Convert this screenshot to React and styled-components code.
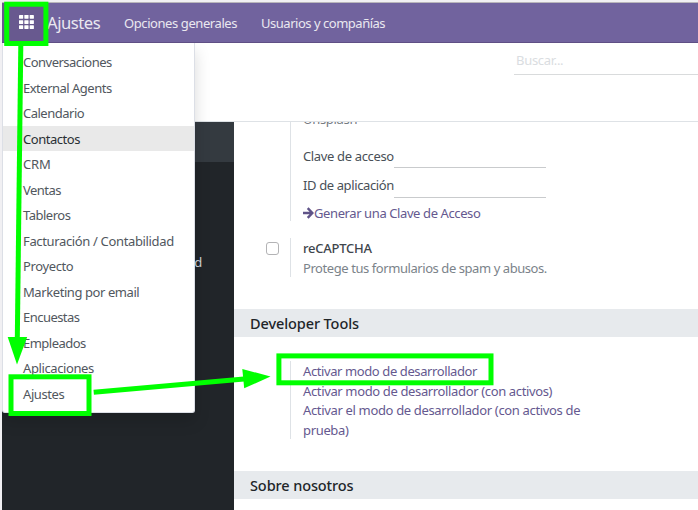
import React from 'react';
import styled, { createGlobalStyle } from 'styled-components';

const GlobalStyle = createGlobalStyle`
  * { box-sizing: border-box; }
  body { margin: 0; background: #f1f0f3; }
`;

const Window = styled.div`
  position: relative;
  width: 698px;
  height: 510px;
  padding: 2px 0 0 2px;
  overflow: hidden;
  background: #f1f0f3;
  color: #495057;
  font-family: 'Noto Sans', 'Open Sans', sans-serif;
  font-size: 13px;
  letter-spacing: -0.3px;
  line-height: 20px;
  white-space: nowrap;
`;

const Shell = styled.div`
  display: flex;
  flex-direction: column;
  height: 508px;
  background: #fff;
`;

const NavBar = styled.nav`
  display: flex;
  flex: none;
  align-items: center;
  height: 41px;
  border-top: 1px solid #b9b6bb;
  border-bottom: 1px solid #5f4f85;
  background: #71639e;
  color: #eae8f0;
`;

const AppsButton = styled.button`
  display: flex;
  align-items: center;
  align-self: stretch;
  width: 43px;
  padding: 0 0 2px 17px;
  border: 0;
  background: #68598f;
`;

const Brand = styled.span`
  width: 77px;
  margin-left: 2px;
  padding-top: 1px;
  font-size: 16.6px;
  letter-spacing: -0.45px;
`;

const NavLink = styled.a`
  width: ${(p) => p.$width}px;
  padding-top: 1px;
  letter-spacing: ${(p) => p.$track}px;
`;

const ControlPanel = styled.header`
  display: flex;
  flex: none;
  justify-content: flex-end;
  height: 79px;
  border-bottom: 1px solid #dee2e6;
`;

const SearchBox = styled.div`
  width: 184px;
  height: 32px;
  padding: 7px 2px 0;
  border-bottom: 1px solid #d9dbdc;
  color: #dadde1;
`;

const Body = styled.div`
  display: flex;
  flex: 1;
  min-height: 0;
`;

const Sidebar = styled.aside`
  flex: none;
  width: 232px;
  background: #212529;
  color: #ced4da;
`;

const ActiveTab = styled.div`
  height: 40px;
  background: #343a40;
`;

const SidebarTab = styled.div`
  width: 200px;
  padding-top: 90px;
  text-align: right;
`;

const Settings = styled.main`
  flex: 1;
  min-width: 0;
  overflow: hidden;
`;

const Setting = styled.section`
  display: flex;
  height: ${(p) => p.$height}px;
  margin-bottom: ${(p) => p.$gap}px;
  margin-top: ${(p) => p.$top || 0}px;
`;

const CheckColumn = styled.div`
  width: 56px;
  padding: 4px 0 0 32px;
`;

const Checkbox = styled.span`
  display: block;
  width: 13px;
  height: 13px;
  border: 1px solid #b3b3b5;
  border-radius: 3px;
  background: #fff;
`;

const Details = styled.div`
  flex: 1;
  padding-left: 12px;
  border-left: 1px solid #dee2e6;
`;

const ClippedLine = styled.div`
  display: flex;
  height: 24px;
  color: #74797f;

  span { margin-top: -13px; }
`;

const Field = styled.div`
  display: flex;
  height: ${(p) => p.$height}px;
`;

const FieldLabel = styled.label`
  flex: none;
  width: 91px;
  letter-spacing: ${(p) => p.$track}px;
`;

const FieldInput = styled.div`
  width: 152px;
  height: ${(p) => p.$height}px;
  border-bottom: 1px solid #c9cbcd;
`;

const ActionLink = styled.a`
  display: flex;
  align-items: center;
  color: #65598f;
  letter-spacing: ${(p) => p.$track || -0.37}px;
`;

const SettingName = styled.div`
  color: #3e454c;
  font-weight: 500;
  letter-spacing: -0.25px;
`;

const Hint = styled.div`
  color: #7b838a;
  letter-spacing: -0.43px;
`;

const SectionTitle = styled.h2`
  height: 28px;
  margin: 0;
  padding: 4px 16px;
  background: #e7eaed;
  color: #212529;
  font-size: 14.5px;
  font-weight: 500;
  line-height: 20px;
  letter-spacing: -0.1px;
`;

const DeveloperLinks = styled.div`
  padding-top: 1px;
  line-height: 19.5px;
`;

const AppMenu = styled.div`
  position: absolute;
  top: 43px;
  left: 2px;
  width: 193px;
  height: 370px;
  padding: 6.4px 0;
  border: 1px solid #dcdfe6;
  border-top: 0;
  border-radius: 0 0 3px 3px;
  background: #fff;
  box-shadow: 0 8px 16px rgba(0, 0, 0, 0.15);
  clip-path: inset(0 -30px -40px 0);
`;

const MenuItem = styled.div`
  height: 25.5px;
  padding-left: 20px;
  background: ${(p) => (p.$active ? '#e9e9e9' : 'transparent')};
  color: ${(p) => (p.$active ? '#2b3035' : '#51575e')};
  line-height: 26.5px;
  letter-spacing: ${(p) => p.$track}px;
`;

const Annotations = styled.svg`
  position: absolute;
  inset: 0;
  pointer-events: none;
`;

const menu = [
  ['Conversaciones', -0.52],
  ['External Agents', -0.5],
  ['Calendario', -0.5],
  ['Contactos', -0.46],
  ['CRM', -0.1],
  ['Ventas', -0.55],
  ['Tableros', -0.5],
  ['Facturación / Contabilidad', -0.35],
  ['Proyecto', -0.38],
  ['Marketing por email', -0.42],
  ['Encuestas', -0.54],
  ['Empleados', -0.52],
  ['Aplicaciones', -0.4],
  ['Ajustes', -0.42],
];

const GridIcon = () => (
  <svg width="15" height="14" viewBox="0 0 15 14" fill="#fff">
    {[0, 5.2, 10.3].map((y) =>
      [0, 5.35, 10.7].map((x) => (
        <rect key={`${x}-${y}`} x={x} y={y} width="4.2" height="3.7" rx="0.4" />
      ))
    )}
  </svg>
);

const ArrowIcon = () => (
  <svg width="11" height="12" viewBox="0 0 11 12" fill="none" stroke="#5f5388" strokeWidth="2.4">
    <path d="M0 6H9M4.7 1.2L9.4 6L4.7 10.8" />
  </svg>
);

export default function App() {
  return (
    <Window>
      <GlobalStyle />
      <Shell>
        <NavBar>
          <AppsButton aria-label="Apps"><GridIcon /></AppsButton>
          <Brand>Ajustes</Brand>
          <NavLink $width={137} $track={-0.42}>Opciones generales</NavLink>
          <NavLink $width={140} $track={-0.48}>Usuarios y compañías</NavLink>
        </NavBar>
        <ControlPanel>
          <SearchBox>Buscar...</SearchBox>
        </ControlPanel>
        <Body>
          <Sidebar>
            <ActiveTab />
            <SidebarTab>Contabilidad</SidebarTab>
          </Sidebar>
          <Settings>
            <Setting $height={99} $gap={17}>
              <CheckColumn />
              <Details>
                <ClippedLine><span>Unsplash</span></ClippedLine>
                <Field $height={29}>
                  <FieldLabel $track={-0.35}>Clave de acceso</FieldLabel>
                  <FieldInput $height={22} />
                </Field>
                <Field $height={28}>
                  <FieldLabel $track={-0.38}>ID de aplicación</FieldLabel>
                  <FieldInput $height={23} />
                </Field>
                <ActionLink $track={-0.4}><ArrowIcon />Generar una Clave de Acceso</ActionLink>
              </Details>
            </Setting>
            <Setting $height={39} $gap={32}>
              <CheckColumn><Checkbox /></CheckColumn>
              <Details>
                <SettingName>reCAPTCHA</SettingName>
                <Hint>Protege tus formularios de spam y abusos.</Hint>
              </Details>
            </Setting>
            <SectionTitle>Developer Tools</SectionTitle>
            <Setting $top={24} $height={78} $gap={32}>
              <CheckColumn />
              <Details>
                <DeveloperLinks>
                  <ActionLink $track={-0.4}>Activar modo de desarrollador</ActionLink>
                  <ActionLink $track={-0.36}>Activar modo de desarrollador (con activos)</ActionLink>
                  <ActionLink $track={-0.34}>Activar el modo de desarrollador (con activos de<br />prueba)</ActionLink>
                </DeveloperLinks>
              </Details>
            </Setting>
            <SectionTitle>Sobre nosotros</SectionTitle>
          </Settings>
        </Body>
      </Shell>
      <AppMenu>
        {menu.map(([label, track]) => (
          <MenuItem key={label} $track={track} $active={label === 'Contactos'}>{label}</MenuItem>
        ))}
      </AppMenu>
      <Annotations width="698" height="510" viewBox="0 0 698 510" fill="none" stroke="#00ff00" strokeWidth="5">
        <rect x="6.7" y="4.2" width="39.2" height="39.3" />
        <path d="M20.8 45L17.3 340" />
        <path d="M7.7 337H27.2L17 364.5Z" fill="#00ff00" stroke="none" />
        <rect x="11" y="376.8" width="78" height="36.7" />
        <path d="M93.7 392.3L244 379" />
        <path d="M242.3 369L244.2 388.3L270.5 376.5Z" fill="#00ff00" stroke="none" />
        <rect x="278.9" y="355.9" width="212.1" height="26.9" />
      </Annotations>
    </Window>
  );
}
